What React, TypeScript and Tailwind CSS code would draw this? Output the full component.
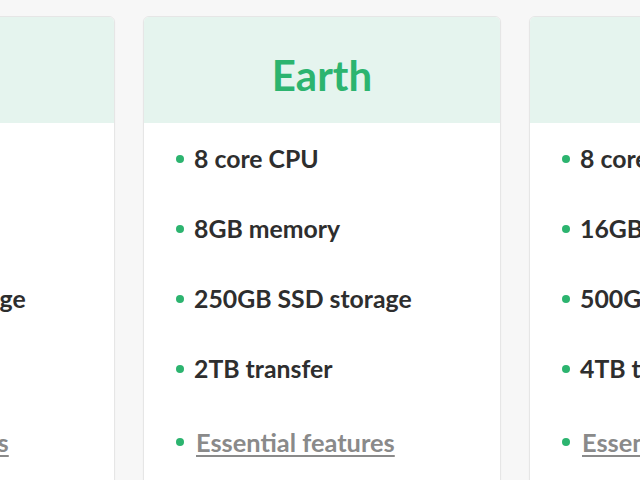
import React from "react";

type Plan = { name: string; items: string[] };

const plans: Plan[] = [
  { name: "Moon", items: ["4 core CPU", "4GB memory", "120GB SSD storage", "1TB transfer"] },
  { name: "Earth", items: ["8 core CPU", "8GB memory", "250GB SSD storage", "2TB transfer"] },
  { name: "Sun", items: ["8 core CPU", "16GB memory", "500GB SSD storage", "4TB transfer"] },
];

function PlanCard({ plan }: { plan: Plan }) {
  return (
    <div className="w-[358px] shrink-0 h-[480px] rounded-md border border-[#e6e6e6] bg-white overflow-hidden shadow-[0_1px_2px_rgba(0,0,0,0.04)]">
      <div className="h-[106px] bg-[#e5f4ee] flex items-center justify-center pt-[10px]">
        <h2 className="text-[42px] font-bold text-[#2cb46f] leading-none">{plan.name}</h2>
      </div>
      <ul className="pl-[32px] pt-[1px] flex flex-col">
        {plan.items.map((t) => (
          <li key={t} className="h-[70px] flex items-center gap-[10px] text-[24.8px] font-bold text-[#2e2e2e]">
            <span className="w-[8px] h-[8px] rounded-full bg-[#2cb46f] shrink-0" />
            {t}
          </li>
        ))}
        <li className="h-[72px] pt-[4px] flex items-center gap-[10px] text-[25.4px] font-bold">
          <span className="w-[8px] h-[8px] rounded-full bg-[#2cb46f] shrink-0" />
          <a href="#" className="text-[#8a8a8a] underline underline-offset-[3px] ml-[2px]">
            Essential features
          </a>
        </li>
      </ul>
    </div>
  );
}

export default function App() {
  return (
    <div
      className="w-[640px] h-[480px] bg-[#f7f7f7] overflow-hidden flex justify-center gap-[28px] pt-[16px] pl-[4px]"
      style={{ fontFamily: "Lato, 'Open Sans', sans-serif" }}
    >
      {plans.map((p) => (
        <PlanCard key={p.name} plan={p} />
      ))}
    </div>
  );
}
